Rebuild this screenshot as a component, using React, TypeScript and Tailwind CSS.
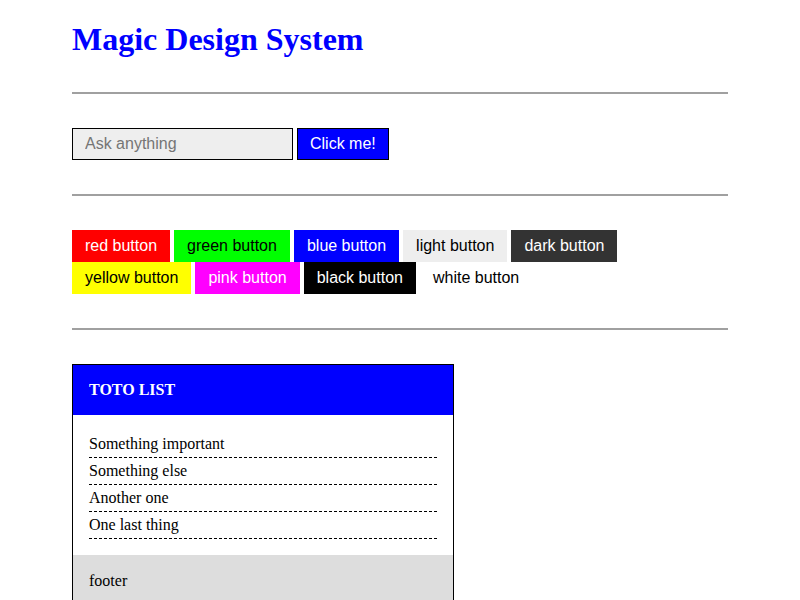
import React from "react";

const buttons: { label: string; cls: string }[] = [
  { label: "red button", cls: "bg-[#ff0000] text-white" },
  { label: "green button", cls: "bg-[#00ff00] text-black" },
  { label: "blue button", cls: "bg-[#0000ff] text-white" },
  { label: "light button", cls: "bg-[#eeeeee] text-black" },
  { label: "dark button", cls: "bg-[#333333] text-white" },
  { label: "yellow button", cls: "bg-[#ffff00] text-black" },
  { label: "pink button", cls: "bg-[#ff00ff] text-white" },
  { label: "black button", cls: "bg-black text-white" },
  { label: "white button", cls: "bg-white text-black" },
];

function Hr() {
  return <div className="h-[2px] w-full bg-[#a0a0a0] my-[34px]" />;
}

export default function App() {
  return (
    <div className="min-h-[600px] bg-white px-[72px] pt-[21px] font-['Liberation_Serif',serif] text-black">
      <h1 className="text-[32px] leading-[37px] font-bold text-[#0000ff]">Magic Design System</h1>
      <Hr />
      <div className="flex gap-1 font-['Liberation_Sans',Arial,sans-serif] text-[16px]">
        <input
          placeholder="Ask anything"
          className="w-[221px] h-[32px] border border-black bg-[#eeeeee] px-3 placeholder:text-[#757575] outline-none"
        />
        <button className="h-[32px] border border-black bg-[#0000ff] px-3 text-white">Click me!</button>
      </div>
      <Hr />
      <div className="flex flex-wrap gap-x-1 w-[560px] font-['Liberation_Sans',Arial,sans-serif] text-[16px]">
        {buttons.map((b) => (
          <button key={b.label} className={`h-[32px] px-[13px] ${b.cls}`}>
            {b.label}
          </button>
        ))}
      </div>
      <Hr />
      <div className="w-[382px] border border-black">
        <div className="h-[50px] bg-[#0000ff] px-4 flex items-center text-white font-bold text-[16px]">TOTO LIST</div>
        <ul className="px-4 pt-[16px] pb-[16px] text-[16px]">
          {["Something important", "Something else", "Another one", "One last thing"].map((t) => (
            <li key={t} className="h-[27px] pt-[3px] leading-[20px] border-b border-dashed border-black">
              {t}
            </li>
          ))}
        </ul>
        <div className="h-[60px] bg-[#dddddd] px-4 pt-[14px] text-[16px]">footer</div>
      </div>
    </div>
  );
}
